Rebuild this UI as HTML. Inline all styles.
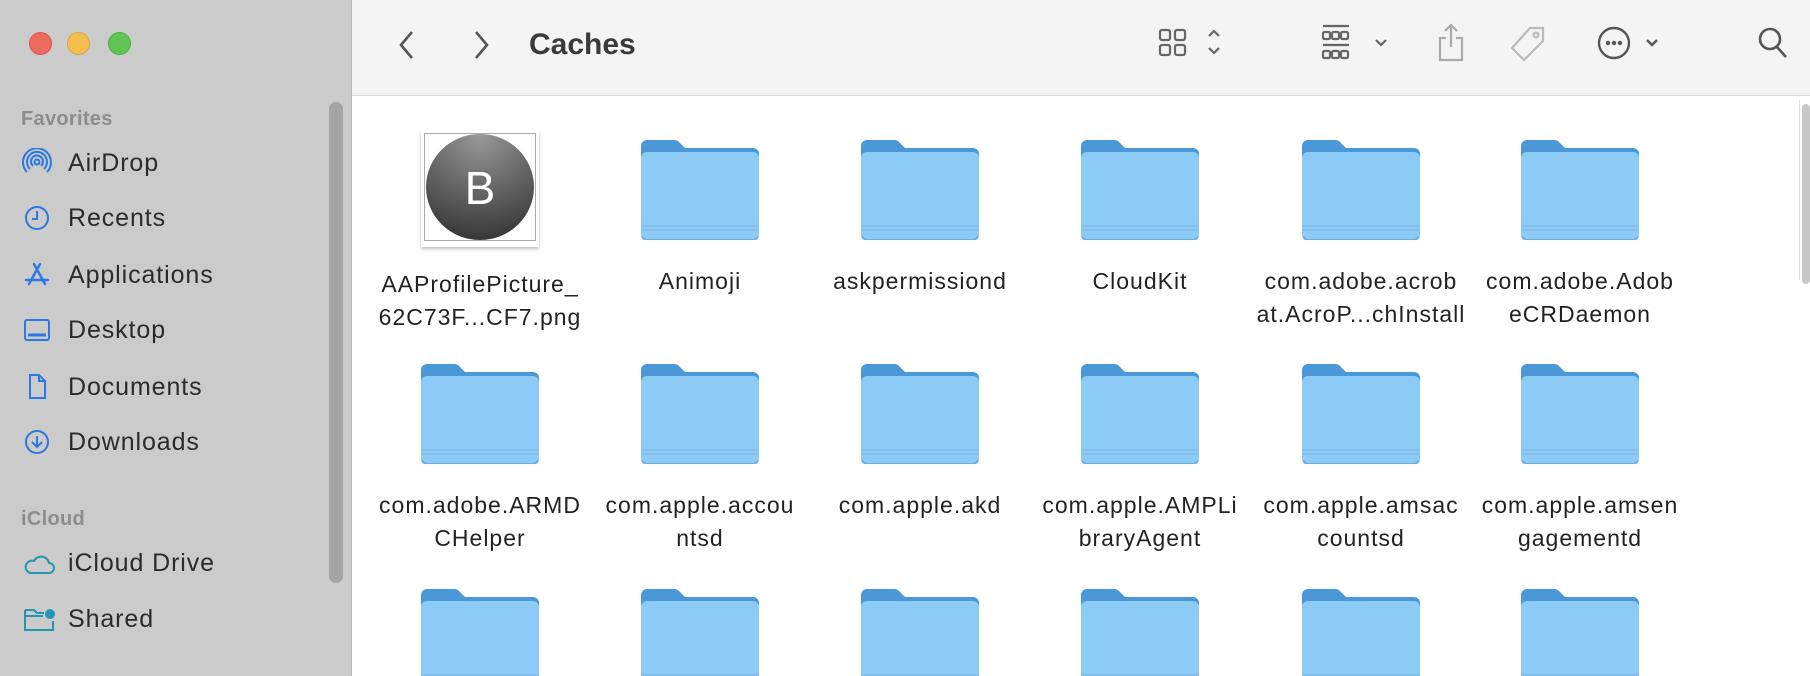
<!DOCTYPE html>
<html style="width:1810px;height:676px;overflow:hidden"><head><meta charset="utf-8"><style>
*{margin:0;padding:0;box-sizing:border-box}
body{width:1810px;height:676px;overflow:hidden;font-family:"Liberation Sans",sans-serif;background:#fff;position:relative}
.sb{position:absolute;left:0;top:0;width:352px;height:676px;background:#cbcbcb;border-right:1px solid #b8b8b8}
.tl{position:absolute;top:32px;width:23px;height:23px;border-radius:50%}
.sec{position:absolute;left:21px;font-size:20px;letter-spacing:0.3px;font-weight:bold;color:#8c8c8c}
.it{position:absolute;left:68px;font-size:25px;letter-spacing:0.9px;color:#2b2b2b}
.ic{position:absolute;left:22px}
.scr{position:absolute;left:329px;top:102px;width:14px;height:481px;border-radius:7px;background:#a4a4a4}
.tb{position:absolute;left:352px;top:0;width:1458px;height:96px;background:#f4f4f4;border-bottom:1px solid #dcdcdc}
.title{position:absolute;left:529px;top:28px;font-size:30px;font-weight:bold;color:#3a3a3a}
.cell{position:absolute;width:220px;text-align:center}
.cell svg{display:block;margin:0 auto}
.lbl{font-size:23px;letter-spacing:1px;line-height:33px;color:#222;margin-top:25px;white-space:nowrap;margin-left:-20px;margin-right:-20px}
.rs{position:absolute;left:1799px;top:100px;width:11px;height:180px;border-left:1px solid #e0e0e0}
.rs div{position:absolute;left:2px;top:4px;width:8px;height:180px;background:#c8c8c8;border-radius:4px}
</style></head><body>
<div class="sb">
<div class="tl" style="left:29px;background:#ed6a5e;border:1px solid #d9534a"></div>
<div class="tl" style="left:67px;background:#f5bf4f;border:1px solid #dba83f"></div>
<div class="tl" style="left:108px;background:#61c554;border:1px solid #4fae44"></div>
<div class="sec" style="top:108px">Favorites</div>
<svg class="ic" style="top:148px" width="30" height="30" viewBox="0 0 30 30" fill="none" stroke="#2a78e4" stroke-width="2"><circle cx="15" cy="14" r="2.5"/><path d="M11 18a6 6 0 1 1 8 0M8 21a10 10 0 1 1 14 0M5 24a14 14 0 1 1 20 0"/></svg>
<div class="it" style="top:149px">AirDrop</div>
<svg class="ic" style="top:203px" width="30" height="30" viewBox="0 0 30 30" fill="none" stroke="#2a78e4" stroke-width="2"><circle cx="15" cy="15" r="11"/><path d="M15 8v8h-5"/></svg>
<div class="it" style="top:204px">Recents</div>
<svg class="ic" style="top:260px" width="30" height="30" viewBox="0 0 30 30" fill="none" stroke="#2a78e4" stroke-width="2.4" stroke-linecap="round"><path d="M12 4l11 20M18 4L7 24M4 20h22"/></svg>
<div class="it" style="top:261px">Applications</div>
<svg class="ic" style="top:315px" width="30" height="30" viewBox="0 0 30 30" fill="none" stroke="#2a78e4" stroke-width="2"><rect x="3" y="5" width="24" height="20" rx="2"/><path d="M6 20h18" stroke-width="3"/></svg>
<div class="it" style="top:316px">Desktop</div>
<svg class="ic" style="top:372px" width="30" height="30" viewBox="0 0 30 30" fill="none" stroke="#2a78e4" stroke-width="2"><path d="M8 3h9l6 6v17H8zM17 3v6h6"/></svg>
<div class="it" style="top:373px">Documents</div>
<svg class="ic" style="top:427px" width="30" height="30" viewBox="0 0 30 30" fill="none" stroke="#2a78e4" stroke-width="2"><circle cx="15" cy="15" r="11"/><path d="M15 9v11M10 15l5 5 5-5"/></svg>
<div class="it" style="top:428px">Downloads</div>
<div class="sec" style="top:508px">iCloud</div>
<svg class="ic" style="top:549px" width="34" height="30" viewBox="0 0 34 30" fill="none" stroke="#2596b2" stroke-width="2"><path d="M8 24h19a5 5 0 0 0 0-10 8 8 0 0 0-15-2 6 6 0 0 0-4 12z"/></svg>
<div class="it" style="top:549px">iCloud Drive</div>
<svg class="ic" style="top:605px" width="34" height="30" viewBox="0 0 34 30" fill="none" stroke="#2596b2" stroke-width="2"><path d="M3 5h9l3 3h7M3 5v20h28V16M3 11h18"/><circle cx="28" cy="9" r="4" fill="#2596b2"/></svg>
<div class="it" style="top:605px">Shared</div>
<div class="scr"></div>
</div>
<div class="tb"></div>
<svg style="position:absolute;left:396px;top:30px" width="22" height="30" viewBox="0 0 22 30" fill="none" stroke="#555" stroke-width="2.6"><path d="M16 2L5 15l11 13"/></svg>
<svg style="position:absolute;left:470px;top:30px" width="22" height="30" viewBox="0 0 22 30" fill="none" stroke="#555" stroke-width="2.6"><path d="M6 2l11 13L6 28"/></svg>
<div class="title">Caches</div>
<svg style="position:absolute;left:1155px;top:26px" width="75" height="36" viewBox="0 0 75 36" fill="none" stroke="#666" stroke-width="2.2"><rect x="5" y="4" width="10" height="10" rx="2"/><rect x="20" y="4" width="10" height="10" rx="2"/><rect x="5" y="19" width="10" height="10" rx="2"/><rect x="20" y="19" width="10" height="10" rx="2"/><path d="M54 10l5-5 5 5M54 22l5 5 5-5"/></svg>
<svg style="position:absolute;left:1320px;top:24px" width="75" height="40" viewBox="0 0 75 40" fill="none" stroke="#666" stroke-width="2.2"><path d="M3 2h26M3 21h26"/><rect x="3" y="8" width="7" height="7" rx="1.5"/><rect x="12" y="8" width="7" height="7" rx="1.5"/><rect x="21" y="8" width="7" height="7" rx="1.5"/><rect x="3" y="27" width="7" height="7" rx="1.5"/><rect x="12" y="27" width="7" height="7" rx="1.5"/><rect x="21" y="27" width="7" height="7" rx="1.5"/><path d="M56 16l5 5 5-5"/></svg>
<svg style="position:absolute;left:1435px;top:22px" width="32" height="42" viewBox="0 0 32 42" fill="none" stroke="#aaa" stroke-width="2.2"><path d="M16 3v22M10 9l6-6 6 6M11 16H5v22h22V16h-6"/></svg>
<svg style="position:absolute;left:1510px;top:24px" width="40" height="40" viewBox="0 0 40 40" fill="none" stroke="#bbb" stroke-width="2.2"><path d="M20 4h13v13L14 36 2 24z"/><circle cx="26" cy="11" r="2.5"/></svg>
<svg style="position:absolute;left:1596px;top:25px" width="75" height="36" viewBox="0 0 75 36" fill="none" stroke="#555" stroke-width="2.4"><circle cx="18" cy="18" r="15"/><circle cx="12" cy="18" r="1" fill="#555"/><circle cx="18" cy="18" r="1" fill="#555"/><circle cx="24" cy="18" r="1" fill="#555"/><path d="M51 15l5 5 5-5"/></svg>
<svg style="position:absolute;left:1756px;top:25px" width="34" height="36" viewBox="0 0 34 36" fill="none" stroke="#555" stroke-width="2.6"><circle cx="14" cy="14" r="10"/><path d="M21 22l9 10"/></svg>
<div class="rs"><div></div></div>

<svg width="0" height="0" style="position:absolute"><defs>
<symbol id="f" viewBox="0 0 118 102">
<path d="M0 8a6 6 0 0 1 6-6h27c3 0 4 1 6 3l5 5h68a6 6 0 0 1 6 6v78a6 6 0 0 1-6 6H6a6 6 0 0 1-6-6z" fill="#4a98d8"/>
<path d="M0 20a6 6 0 0 1 6-6h106a6 6 0 0 1 6 6v76a6 6 0 0 1-6 6H6a6 6 0 0 1-6-6z" fill="#8ccbf5"/>
<path d="M0 88h118M0 92h118" stroke="#7ebce8" stroke-width="1.5"/>
<path d="M1 98a6 6 0 0 0 5 4h106a6 6 0 0 0 5-4" stroke="#6aaee0" stroke-width="2" fill="none"/>
</symbol>
<radialGradient id="g" cx="50%" cy="0%" r="110%"><stop offset="0" stop-color="#9a9a9a"/><stop offset="1" stop-color="#2e2e2e"/></radialGradient>
</defs></svg>

<div class="cell" style="left:370px;top:130px">
<div style="width:118px;height:117px;margin:0 auto;background:#fff;box-shadow:0 2px 3px rgba(0,0,0,.25);padding:3px;position:relative">
<div style="width:112px;height:108px;border:1px solid #aaa;position:relative">
<svg width="110" height="106" viewBox="0 0 110 106"><ellipse cx="55" cy="53" rx="54" ry="53" fill="url(#g)"/><text x="55" y="70" text-anchor="middle" font-family="Liberation Sans" font-size="46" fill="#fff">B</text></svg></div></div>
<div class="lbl" style="margin-top:21px">AAProfilePicture_<br>62C73F...CF7.png</div></div>

<div class="cell" style="left:590px;top:138px"><svg width="118" height="102"><use href="#f"/></svg><div class="lbl">Animoji</div></div>
<div class="cell" style="left:810px;top:138px"><svg width="118" height="102"><use href="#f"/></svg><div class="lbl">askpermissiond</div></div>
<div class="cell" style="left:1030px;top:138px"><svg width="118" height="102"><use href="#f"/></svg><div class="lbl">CloudKit</div></div>
<div class="cell" style="left:1251px;top:138px"><svg width="118" height="102"><use href="#f"/></svg><div class="lbl">com.adobe.acrob<br>at.AcroP...chInstall</div></div>
<div class="cell" style="left:1470px;top:138px"><svg width="118" height="102"><use href="#f"/></svg><div class="lbl">com.adobe.Adob<br>eCRDaemon</div></div>

<div class="cell" style="left:370px;top:362px"><svg width="118" height="102"><use href="#f"/></svg><div class="lbl">com.adobe.ARMD<br>CHelper</div></div>
<div class="cell" style="left:590px;top:362px"><svg width="118" height="102"><use href="#f"/></svg><div class="lbl">com.apple.accou<br>ntsd</div></div>
<div class="cell" style="left:810px;top:362px"><svg width="118" height="102"><use href="#f"/></svg><div class="lbl">com.apple.akd</div></div>
<div class="cell" style="left:1030px;top:362px"><svg width="118" height="102"><use href="#f"/></svg><div class="lbl">com.apple.AMPLi<br>braryAgent</div></div>
<div class="cell" style="left:1251px;top:362px"><svg width="118" height="102"><use href="#f"/></svg><div class="lbl">com.apple.amsac<br>countsd</div></div>
<div class="cell" style="left:1470px;top:362px"><svg width="118" height="102"><use href="#f"/></svg><div class="lbl">com.apple.amsen<br>gagementd</div></div>

<div style="position:absolute;left:352px;top:587px;width:1447px;height:89px;overflow:hidden">
<svg style="position:absolute;left:69px;top:0" width="118" height="102"><use href="#f"/></svg>
<svg style="position:absolute;left:289px;top:0" width="118" height="102"><use href="#f"/></svg>
<svg style="position:absolute;left:509px;top:0" width="118" height="102"><use href="#f"/></svg>
<svg style="position:absolute;left:729px;top:0" width="118" height="102"><use href="#f"/></svg>
<svg style="position:absolute;left:950px;top:0" width="118" height="102"><use href="#f"/></svg>
<svg style="position:absolute;left:1169px;top:0" width="118" height="102"><use href="#f"/></svg>
</div>
</body></html>
